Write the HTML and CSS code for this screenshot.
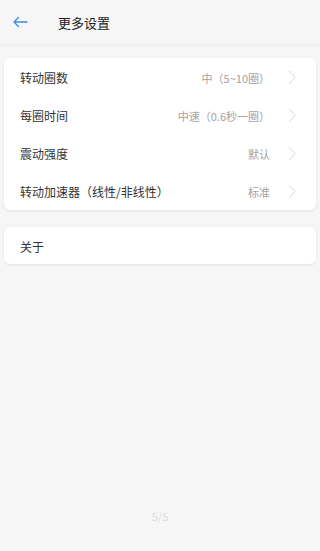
FILE: index.html
```html
<!DOCTYPE html>
<html lang="zh-CN">
<head>
  <meta charset="UTF-8" />
  <meta name="viewport" content="width=device-width, initial-scale=1.0"/>
  <title>更多设置</title>
  <link rel="stylesheet" href="styles.css">
</head>
<body>
  <header class="top-bar">
    <a href="#" class="back-btn">
      <svg width="16" height="12" viewBox="0 0 16 12"><path d="M15 6H2M6.5 1.5L2 6l4.5 4.5" fill="none" stroke="#3d8fe0" stroke-width="1.4" stroke-linecap="round" stroke-linejoin="round"/></svg>
    </a>
    <h1>更多设置</h1>
  </header>

  <div class="card">
    <div class="row">
      <span class="label">转动圈数</span>
      <span class="value">中（5~10圈）</span>
      <svg class="chevron" width="8" height="15" viewBox="0 0 8 15"><path d="M1 1l6 6.5L1 14" fill="none" stroke="#dadada" stroke-width="1"/></svg>
    </div>
    <div class="row">
      <span class="label">每圈时间</span>
      <span class="value">中速（0.6秒一圈）</span>
      <svg class="chevron" width="8" height="15" viewBox="0 0 8 15"><path d="M1 1l6 6.5L1 14" fill="none" stroke="#dadada" stroke-width="1"/></svg>
    </div>
    <div class="row">
      <span class="label">震动强度</span>
      <span class="value">默认</span>
      <svg class="chevron" width="8" height="15" viewBox="0 0 8 15"><path d="M1 1l6 6.5L1 14" fill="none" stroke="#dadada" stroke-width="1"/></svg>
    </div>
    <div class="row">
      <span class="label">转动加速器（线性/非线性）</span>
      <span class="value">标准</span>
      <svg class="chevron" width="8" height="15" viewBox="0 0 8 15"><path d="M1 1l6 6.5L1 14" fill="none" stroke="#dadada" stroke-width="1"/></svg>
    </div>
  </div>

  <div class="card">
    <div class="row">
      <span class="label">关于</span>
    </div>
  </div>

  <div class="pager">5/5</div>
</body>
</html>
```

FILE: styles.css
```css
body {
  margin: 0;
  height: 551px;
  background: #f6f6f6;
  font-family: "Noto Sans CJK SC", "Noto Sans", sans-serif;
  color: #333333;
  position: relative;
}

.top-bar {
  height: 44px;
  display: flex;
  align-items: center;
  border-bottom: 1px solid #ededed;
  box-shadow: 0 1px 2px rgba(0,0,0,0.03);
  margin-bottom: 13px;
}

.back-btn {
  display: flex;
  margin-left: 12px;
  width: 16px;
}

.top-bar h1 {
  margin: 0 0 0 30px;
  font-size: 13px;
  font-weight: normal;
  color: #222222;
}

.card {
  background: #ffffff;
  margin: 0 4px 17px;
  border-radius: 6px;
  box-shadow: 0 1px 3px rgba(0,0,0,0.08);
}

.row {
  height: 38px;
  display: flex;
  align-items: center;
  padding: 0 20px 0 16px;
}

.card + .card .row {
  height: 37px;
}

.label {
  flex: 1;
  font-size: 12px;
  color: #333333;
  padding-top: 1px;
}

.value {
  font-size: 11px;
  color: #a3a3a3;
  margin-right: 18px;
  padding-top: 1px;
}

.chevron {
  display: block;
}

.pager {
  position: absolute;
  left: 0;
  right: 0;
  top: 508px;
  text-align: center;
  font-size: 11px;
  color: #dcdcdc;
}
```
